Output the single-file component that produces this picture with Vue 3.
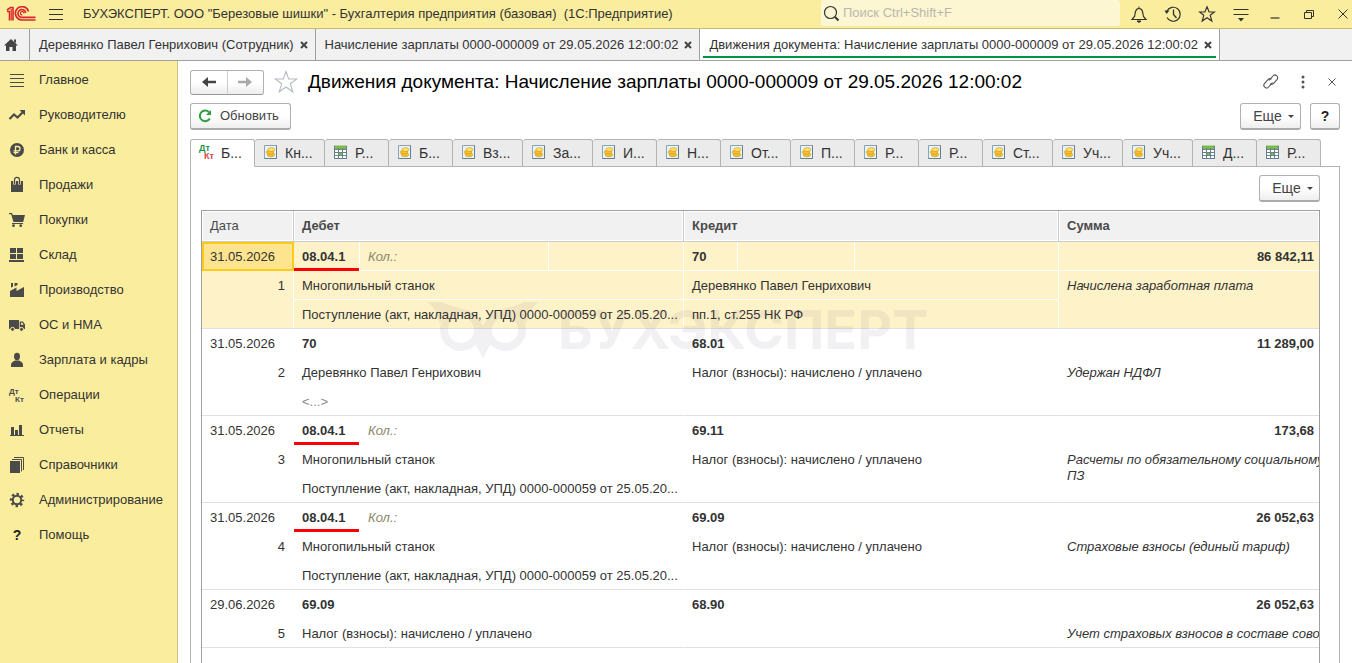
<template>
  <div class="app">
    <header class="title-bar">
      <svg class="logo" viewBox="0 0 30 16" aria-label="1C">
        <g fill="none" stroke="#d9262c">
          <path d="M1 5.5H3.5V14.5M1 4L4.5 1.5H7V14.5" stroke-width="1.6" />
          <path d="M5.2 3V14.5" stroke-width="1.2" />
          <path d="M22.5 5.5A6.7 6.7 0 1 0 16.5 14H29.5" stroke-width="1.7" />
          <path d="M19.7 6.8A3.9 3.9 0 1 0 16.5 11.3H29.5" stroke-width="1.7" />
          <path d="M18 7.5A1.8 1.8 0 1 0 16.3 9" stroke-width="1.2" />
        </g>
      </svg>
      <button class="icon-button menu-button" aria-label="Меню">
        <svg width="14" height="13" viewBox="0 0 14 13"><path d="M0 1.5H14M0 6.5H14M0 11.5H14" stroke="#333" /></svg>
      </button>
      <span class="app-title">БУХЭКСПЕРТ. ООО "Березовые шишки" - Бухгалтерия предприятия (базовая)&nbsp; (1С:Предприятие)</span>
      <label class="search">
        <svg width="17" height="17" viewBox="0 0 17 17" fill="none" stroke="#333">
          <circle cx="7.5" cy="7.5" r="6" stroke-width="1.2" />
          <path d="M12 12L15.5 15.5" stroke-width="2" />
        </svg>
        <input v-model="search" type="text" placeholder="Поиск Ctrl+Shift+F" aria-label="Поиск" />
      </label>
      <div class="window-tools">
        <button v-for="tool in tools" :key="tool" class="icon-button" :aria-label="tool">
          <svg width="18" height="18" viewBox="0 0 18 18" fill="none" stroke="#333" v-html="icons[tool]"></svg>
        </button>
      </div>
    </header>

    <nav class="open-tabs">
      <button class="home" aria-label="Начальная страница">
        <svg width="16" height="14" viewBox="0 0 16 14"><path d="M8 1L15 7.5H13V13H9.5V9H6.5V13H3V7.5H1L8 1ZM11 1.5H13V5L11 3.5Z" fill="#444" /></svg>
      </button>
      <div
          v-for="(tab, index) in openTabs"
          :key="index"
          class="open-tab"
          :class="{ current: index === 2 }"
      >
        <a href="#">{{ tab }}</a>
        <button class="icon-button" aria-label="Закрыть">
          <svg width="8" height="8" viewBox="0 0 8 8"><path d="M1 1L7 7M7 1L1 7" stroke="#444" stroke-width="2" /></svg>
        </button>
      </div>
    </nav>

    <div class="body">
      <aside class="sidebar">
        <a v-for="item in sections" :key="item.icon" href="#" class="section">
          <svg width="18" height="18" viewBox="0 0 18 18" fill="#4a4a4a" v-html="icons[item.icon]"></svg>
          <span>{{ item.label }}</span>
        </a>
      </aside>

      <main class="form">
        <div class="form-head">
          <div class="history">
            <button aria-label="Назад">
              <svg width="16" height="12" viewBox="0 0 16 12"><path d="M1 6L7 1V4.8H15V7.2H7V11Z" fill="#444" /></svg>
            </button>
            <button aria-label="Вперед">
              <svg width="16" height="12" viewBox="0 0 16 12"><path d="M15 6L9 1V4.8H1V7.2H9V11Z" fill="#aaa" /></svg>
            </button>
          </div>
          <button class="icon-button" aria-label="В избранное">
            <svg width="24" height="24" viewBox="0 0 24 24">
              <path d="M12 1.5L14.7 9H22.8L16.3 13.8L18.8 21.8L12 17L5.2 21.8L7.7 13.8L1.2 9H9.3Z" fill="#fff" stroke="#b4bac2" stroke-width="1.1" />
            </svg>
          </button>
          <h1>Движения документа: Начисление зарплаты 0000-000009 от 29.05.2026 12:00:02</h1>
          <div class="form-tools">
            <button class="icon-button" aria-label="Ссылка">
              <svg width="18" height="18" viewBox="0 0 18 18" fill="none" stroke="#555" stroke-width="1.1">
                <path d="M7 7.5L11 3A2.6 2.6 0 0 1 15 6.6L11.6 10.4A2.6 2.6 0 0 1 8.2 10.8" />
                <path d="M10.6 9.5L6.6 14A2.6 2.6 0 0 1 2.6 10.4L6 6.6A2.6 2.6 0 0 1 9.4 6.2" />
              </svg>
            </button>
            <button class="icon-button" aria-label="Действия">
              <svg width="12" height="14" viewBox="0 0 12 14" fill="#555">
                <circle cx="5" cy="2" r="1.5" /><circle cx="5" cy="7" r="1.5" /><circle cx="5" cy="12" r="1.5" />
              </svg>
            </button>
            <button class="icon-button" aria-label="Закрыть форму">
              <svg width="8" height="8" viewBox="0 0 8 8"><path d="M0.5 0.5L7.5 7.5M7.5 0.5L0.5 7.5" stroke="#555" /></svg>
            </button>
          </div>
        </div>

        <div class="command-bar">
          <button class="button">
            <svg width="14" height="14" viewBox="0 0 14 14">
              <path d="M11.8 9.5A5.3 5.3 0 1 1 11 3.2" fill="none" stroke="#2f9e3c" stroke-width="2" />
              <path d="M13 1V6H8Z" fill="#2f9e3c" />
            </svg>
            Обновить
          </button>
          <div class="command-right">
            <button class="button more">Еще<i class="caret"></i></button>
            <button class="button help">?</button>
          </div>
        </div>

        <div class="register-tabs" role="tablist">
          <button
              v-for="(tab, index) in registerTabs"
              :key="index"
              role="tab"
              class="register-tab"
              :class="{ active: index === activeTab, wide: tab.label.length > 1 }"
              @click="activeTab = index"
          >
            <svg width="18" height="18" viewBox="0 0 18 18" v-html="icons[tab.icon]"></svg>
            <span>{{ tab.label }}...</span>
          </button>
        </div>

        <section class="panel">
          <button class="button more">Еще<i class="caret"></i></button>

          <div class="table-box">
            <table>
              <colgroup>
                <col class="c-date" />
                <col class="c-account" />
                <col class="c-quantity" />
                <col class="c-currency" />
                <col class="c-credit" />
                <col class="c-quantity-credit" />
                <col class="c-currency-credit" />
                <col />
              </colgroup>
              <thead>
                <tr>
                  <th class="light">Дата</th>
                  <th colspan="3">Дебет</th>
                  <th colspan="3">Кредит</th>
                  <th>Сумма</th>
                </tr>
              </thead>
              <tbody v-for="(entry, index) in entries" :key="index" :class="{ selected: index === 0 }">
                <tr>
                  <td class="date">{{ entry.date }}</td>
                  <td class="account" :class="{ marked: entry.marked }">{{ entry.debit }}</td>
                  <td class="quantity">{{ entry.marked ? 'Кол.:' : '' }}</td>
                  <td></td>
                  <td class="account">{{ entry.credit }}</td>
                  <td></td>
                  <td></td>
                  <td class="sum">{{ entry.sum }}</td>
                </tr>
                <tr>
                  <td class="number" :rowspan="entry.debitRows.length">{{ index + 1 }}</td>
                  <td colspan="3">{{ entry.debitRows[0] }}</td>
                  <td colspan="3">{{ entry.creditRows[0] }}</td>
                  <td class="note" :rowspan="entry.debitRows.length">{{ entry.note }}</td>
                </tr>
                <tr v-if="entry.debitRows.length > 1">
                  <td colspan="3" :class="{ empty: entry.debitRows[1] === '<...>' }">{{ entry.debitRows[1] }}</td>
                  <td colspan="3">{{ entry.creditRows[1] }}</td>
                </tr>
              </tbody>
            </table>

            <div class="watermark" aria-hidden="true">
              <svg width="112" height="56" viewBox="0 0 112 56">
                <g fill="none" stroke="currentColor" stroke-width="8">
                  <circle cx="34" cy="28" r="17" />
                  <circle cx="78" cy="28" r="17" />
                </g>
                <path d="M0 0H14C30 7 46 6 56 24C66 6 82 7 98 0H112C106 4 102 10 99 22C94 12 84 8 74 10C64 14 60 24 56 34C52 24 48 14 38 10C28 8 18 12 13 22C10 10 6 4 0 0Z" />
                <path d="M46 38L56 28L66 38L56 56Z" />
              </svg>
              <span>БУХЭКСПЕРТ</span>
            </div>
          </div>
        </section>
      </main>
    </div>
  </div>
</template>

<script setup>
import { ref } from 'vue'

const search = ref('')
const activeTab = ref(0)

const tools = ['bell', 'history', 'star', 'settings', 'minimize', 'restore', 'close']

const openTabs = [
  'Деревянко Павел Генрихович (Сотрудник)',
  'Начисление зарплаты 0000-000009 от 29.05.2026 12:00:02',
  'Движения документа: Начисление зарплаты 0000-000009 от 29.05.2026 12:00:02'
]

const sections = [
  { label: 'Главное', icon: 'main' },
  { label: 'Руководителю', icon: 'trend' },
  { label: 'Банк и касса', icon: 'ruble' },
  { label: 'Продажи', icon: 'bag' },
  { label: 'Покупки', icon: 'cart' },
  { label: 'Склад', icon: 'store' },
  { label: 'Производство', icon: 'factory' },
  { label: 'ОС и НМА', icon: 'truck' },
  { label: 'Зарплата и кадры', icon: 'person' },
  { label: 'Операции', icon: 'operations' },
  { label: 'Отчеты', icon: 'reports' },
  { label: 'Справочники', icon: 'books' },
  { label: 'Администрирование', icon: 'gear' },
  { label: 'Помощь', icon: 'help' }
]

const registerTabs = [
  { label: 'Б', icon: 'dtkt' },
  { label: 'Кн', icon: 'coins' },
  { label: 'Р', icon: 'sheet' },
  { label: 'Б', icon: 'coins' },
  { label: 'Вз', icon: 'coins' },
  { label: 'За', icon: 'coins' },
  { label: 'И', icon: 'coins' },
  { label: 'Н', icon: 'coins' },
  { label: 'От', icon: 'coins' },
  { label: 'П', icon: 'coins' },
  { label: 'Р', icon: 'coins' },
  { label: 'Р', icon: 'coins' },
  { label: 'Ст', icon: 'coins' },
  { label: 'Уч', icon: 'coins' },
  { label: 'Уч', icon: 'coins' },
  { label: 'Д', icon: 'sheet' },
  { label: 'Р', icon: 'sheet' }
]

const receipt = 'Поступление (акт, накладная, УПД) 0000-000059 от 25.05.20...'
const tax = 'Налог (взносы): начислено / уплачено'

const entries = [
  {
    date: '31.05.2026',
    debit: '08.04.1',
    credit: '70',
    sum: '86 842,11',
    marked: true,
    debitRows: ['Многопильный станок', receipt],
    creditRows: ['Деревянко Павел Генрихович', 'пп.1, ст.255 НК РФ'],
    note: 'Начислена заработная плата'
  },
  {
    date: '31.05.2026',
    debit: '70',
    credit: '68.01',
    sum: '11 289,00',
    debitRows: ['Деревянко Павел Генрихович', '<...>'],
    creditRows: [tax],
    note: 'Удержан НДФЛ'
  },
  {
    date: '31.05.2026',
    debit: '08.04.1',
    credit: '69.11',
    sum: '173,68',
    marked: true,
    debitRows: ['Многопильный станок', receipt],
    creditRows: [tax],
    note: 'Расчеты по обязательному социальному\nПЗ'
  },
  {
    date: '31.05.2026',
    debit: '08.04.1',
    credit: '69.09',
    sum: '26 052,63',
    marked: true,
    debitRows: ['Многопильный станок', receipt],
    creditRows: [tax],
    note: 'Страховые взносы (единый тариф)'
  },
  {
    date: '29.06.2026',
    debit: '69.09',
    credit: '68.90',
    sum: '26 052,63',
    debitRows: [tax],
    creditRows: [''],
    note: 'Учет страховых взносов в составе сово'
  }
]

// inner markup of the 18x18 icons
const icons = {
  bell: '<path d="M2 14.5H16L13.5 11.5C13 10 13 8 12.5 6.5C12 4.5 10.5 3.5 9 3.5C7.5 3.5 6 4.5 5.5 6.5C5 8 5 10 4.5 11.5Z" stroke-width="1.2"/><path d="M9 1.5V3.5"/><path d="M7 16H11L9 17.5Z" fill="#333"/>',
  history: '<path d="M3 6A7 7 0 1 1 3 12.5" stroke-width="1.2"/><path d="M0.5 5.5H5.5L2.5 9Z" fill="#333" stroke="none"/><path d="M9.5 4.5V9.5L12.5 13" stroke-width="1.3"/>',
  star: '<path d="M9 1.8L11.1 7H16.5L12.2 10.3L13.8 16L9 12.7L4.2 16L5.8 10.3L1.5 7H6.9Z" stroke-width="1.2"/>',
  settings: '<path d="M1.5 4.5H16.5M1.5 9.5H16.5" stroke-width="1.2"/><path d="M6 13H12L9 16.5Z" fill="#333" stroke="none"/>',
  minimize: '<path d="M4.5 13H13.5" stroke-width="1.2"/>',
  restore: '<path d="M4.5 7.5H11.5V13.5H4.5ZM6.5 7.5V5.5H13.5V11.5H11.5"/>',
  close: '<path d="M4.5 4.5L13.5 13.5M13.5 4.5L4.5 13.5"/>',
  main: '<path d="M2 3.5H16M2 7.5H16M2 11.5H16M2 15.5H16" stroke="#4a4a4a"/>',
  trend: '<path d="M1.5 13L6 8.5L9.5 11.5L14.5 6.5" fill="none" stroke="#4a4a4a" stroke-width="2.2"/><path d="M11.5 4H17V9.5Z"/>',
  ruble: '<circle cx="9" cy="9" r="7"/><path d="M7.5 13.5V5.5H9.8A2.2 2.2 0 0 1 9.8 9.9H5.5M5.5 11.7H10.5" fill="none" stroke="#fbed9e" stroke-width="1.3"/>',
  bag: '<path d="M3 5H15V16H3Z"/><path d="M6.5 8.5V4A2.5 2.5 0 0 1 11.5 4V8.5" fill="none" stroke="#fbed9e" stroke-width="2.6"/><path d="M6.5 8V3.8A2.5 2.5 0 0 1 11.5 3.8V8" fill="none" stroke="#4a4a4a" stroke-width="1.2"/>',
  cart: '<path d="M1 2H4L4.8 4H17L15.2 11H5.4L3.2 3.3H1Z"/><path d="M4 12H15V13H4Z"/><circle cx="5.5" cy="14.7" r="1.4"/><circle cx="12.7" cy="14.7" r="1.4"/>',
  store: '<path d="M2 2H8V7H2ZM9 2H15V7H9ZM2 8H8V13H2ZM9 8H15V13H9ZM1 14H16V16H1Z"/>',
  factory: '<path d="M2 16V10L8.5 6.5V10L16 6V16ZM3 2H5V5.5L3 6.8ZM6.5 2H9.5V4L6.5 5.5Z"/>',
  truck: '<path d="M1 4H11V13H1ZM11.7 5.5H15L17 8.5V13H11.7Z"/><path d="M13 6.7H14.5L15.6 8.7H13Z" fill="#fbed9e"/><g stroke="#fbed9e"><circle cx="4.5" cy="13.3" r="2"/><circle cx="13.5" cy="13.3" r="2"/></g>',
  person: '<ellipse cx="9" cy="5.5" rx="3" ry="3.7"/><path d="M3 16V13.5C3 11.5 5 10.5 7 9.5H11C13 10.5 15 11.5 15 13.5V16Z"/>',
  operations: '<g font-family="Liberation Sans, sans-serif" font-weight="bold" font-size="8"><text x="1" y="8">Дт</text><text x="7" y="16">Кт</text></g>',
  reports: '<path d="M3 6H6V14H3ZM7 9H10V14H7ZM11 4H14V14H11ZM2 14H16V15H2Z"/>',
  books: '<path d="M2 5H12V17H2Z"/><path d="M4 3.5H13.5V15.5M6 1.5H15.5V14" fill="none" stroke="#4a4a4a"/>',
  gear: '<circle cx="9" cy="9" r="4.2" fill="none" stroke="#4a4a4a" stroke-width="2"/><circle cx="9" cy="9" r="6" fill="none" stroke="#4a4a4a" stroke-width="2.4" stroke-dasharray="2.4 2.31" stroke-dashoffset="1.2"/>',
  help: '<text x="9" y="14" text-anchor="middle" fill="#222" font-family="Liberation Sans, sans-serif" font-weight="bold" font-size="14">?</text>',
  dtkt: '<g font-family="Liberation Sans, sans-serif" font-weight="bold" font-size="9"><text x="1" y="7" fill="#16944a">Дт</text><text x="6" y="15" fill="#d9444a">Кт</text></g>',
  coins: '<path d="M2.5 1.5H14.5V14.5H2.5Z" fill="#e9f3f8" stroke="#8aa4b5"/><path d="M14.5 1.5V14.5H2.5" fill="none" stroke="#66808f"/><g fill="#f5c02c" stroke="#c8890c" stroke-width="0.5"><ellipse cx="9" cy="10.8" rx="3.8" ry="1.9"/><ellipse cx="8" cy="8.2" rx="3.8" ry="1.9"/><ellipse cx="9.4" cy="5.6" rx="3.6" ry="1.9" fill="#ffe06a"/></g>',
  sheet: '<path d="M2.5 2.5H14.5V14.5H2.5Z" fill="#fff"/><path d="M2 1.5H15V5H2Z" fill="#7dba4c"/><path d="M7 9H10V11H7Z" fill="#7dba4c"/><path d="M2.5 5.5H14.5M2.5 8.5H14.5M2.5 11.5H14.5M2.5 14.5H14.5M2.5 2V15M6.5 4V15M10.5 4V15M14.5 2V15" fill="none" stroke="#66808f"/>'
}
</script>

<style>
body {
  margin: 0;
  overflow: hidden;
}
</style>

<style scoped>
.app {
  height: 100vh;
  display: flex;
  flex-direction: column;
  background: #fff;
  color: #333;
  font-family: "Liberation Sans", Arial, sans-serif;
  font-size: 13px;
  line-height: 16px;
}

button,
input {
  font: inherit;
  color: inherit;
}

a {
  color: inherit;
  text-decoration: none;
}

svg {
  display: block;
  flex: none;
}

.icon-button {
  display: flex;
  padding: 0;
  border: none;
  background: none;
}

.title-bar {
  display: flex;
  align-items: center;
  flex: none;
  height: 28px;
  padding: 0 0 0 6px;
  background: #fbed9e;
  border-bottom: 1px solid #c9ba72;
}

.logo {
  width: 30px;
  height: 16px;
}

.menu-button {
  margin: 0 20px 0 13px;
}

.app-title {
  flex: 1;
  white-space: nowrap;
}

.search {
  display: flex;
  align-items: center;
  align-self: flex-start;
  gap: 3px;
  width: 297px;
  height: 26px;
  padding-left: 2px;
  border-radius: 3px;
  background: #fdf6d3;
}

.search input {
  flex: 1;
  min-width: 0;
  padding: 0;
  border: none;
  outline: none;
  background: none;
}

.search input::placeholder {
  color: #b9b7ad;
}

.window-tools {
  display: flex;
  gap: 16px;
  margin-left: 10px;
}

.open-tabs {
  display: flex;
  flex: none;
  height: 31px;
  background: #f1f1f1;
  border-bottom: 1px solid #a0a0a0;
}

.home {
  width: 30px;
  padding: 0 0 0 3px;
  border: none;
  border-right: 1px solid #a0a0a0;
  background: none;
}

.open-tab {
  display: flex;
  align-items: center;
  gap: 6px;
  padding: 0 7px 0 9px;
  border-right: 1px solid #a0a0a0;
  white-space: nowrap;
}

.open-tab.current {
  background: linear-gradient(#009646, #009646) center bottom 2px / calc(100% - 6px) 2px no-repeat #fff;
}

.body {
  flex: 1;
  display: flex;
  min-height: 0;
}

.sidebar {
  flex: none;
  width: 177px;
  padding-top: 1px;
  background: #fbed9e;
  border-right: 1px solid #c9c08a;
}

.section {
  display: flex;
  align-items: center;
  gap: 13px;
  height: 35px;
  padding-left: 8px;
}

.form {
  flex: 1;
  min-width: 0;
  display: flex;
  flex-direction: column;
  padding: 8px 12px 0;
}

.form-head {
  display: flex;
  align-items: center;
  height: 26px;
  gap: 10px;
}

.history {
  display: flex;
  box-sizing: border-box;
  width: 74px;
  height: 25px;
  border: 1px solid #b0b0b0;
  border-bottom-color: #999;
  border-radius: 3px;
  background: linear-gradient(#fff 50%, #ededed);
}

.history button {
  flex: 1;
  display: flex;
  align-items: center;
  justify-content: center;
  padding: 0;
  border: none;
  background: none;
}

.history button + button {
  border-left: 1px solid #ccc;
}

h1 {
  flex: 1;
  margin: 0;
  color: #000;
  font-size: 19px;
  font-weight: normal;
  line-height: 24px;
  white-space: nowrap;
}

.form-tools {
  display: flex;
  align-items: center;
  gap: 18px;
  padding-right: 4px;
}

.command-bar {
  display: flex;
  justify-content: space-between;
  margin-top: 8px;
}

.command-right {
  display: flex;
  gap: 9px;
}

.button {
  display: flex;
  align-items: center;
  justify-content: center;
  gap: 8px;
  box-sizing: border-box;
  height: 27px;
  padding: 0 11px 0 7px;
  border: 1px solid #b0b0b0;
  border-bottom: 2px solid #aaa;
  border-radius: 3px;
  background: linear-gradient(#fff 50%, #efefef);
  color: #444;
}

.more {
  width: 61px;
  gap: 6px;
  padding: 0 6px 0 12px;
  font-size: 14px;
}

.help {
  width: 30px;
  padding: 0;
  color: #222;
  font-size: 14px;
  font-weight: bold;
}

.caret {
  border: 3px solid transparent;
  border-top-color: #444;
  border-bottom: none;
}

.register-tabs {
  display: flex;
  flex: none;
  margin-top: 9px;
  padding-left: 1px;
}

.register-tab {
  display: flex;
  align-items: center;
  gap: 5px;
  box-sizing: border-box;
  width: 64px;
  height: 28px;
  padding: 0 0 1px 7px;
  border: 1px solid #b3b3b3;
  border-left: none;
  border-radius: 3px 3px 0 0;
  background: #ebebeb;
  font-size: 14px;
}

.register-tab.wide {
  width: 70px;
}

.register-tab.active {
  margin-left: -1px;
  width: 65px;
  border-left: 1px solid #b3b3b3;
  border-bottom-color: #fff;
  background: #fff;
  z-index: 1;
}

.panel {
  flex: 1;
  display: flex;
  flex-direction: column;
  min-height: 0;
  margin-top: -1px;
  padding: 8px 19px 0 10px;
  border: 1px solid #b3b3b3;
  border-bottom: none;
}

.panel > .more {
  flex: none;
  align-self: flex-end;
  margin-bottom: 8px;
}

.table-box {
  position: relative;
  flex: 1;
  min-height: 0;
  overflow: hidden;
  border: 1px solid #a0a0a0;
  border-bottom: none;
}

table {
  width: 100%;
  table-layout: fixed;
  border-collapse: separate;
  border-spacing: 0;
}

.c-date {
  width: 92px;
}

.c-account {
  width: 66px;
}

.c-quantity {
  width: 189px;
}

.c-currency {
  width: 135px;
}

.c-credit {
  width: 54px;
}

.c-quantity-credit {
  width: 117px;
}

.c-currency-credit {
  width: 204px;
}

th,
td {
  box-sizing: border-box;
  overflow: hidden;
  height: 29px;
  padding: 0 8px;
  border-right: 1px solid #fff;
  border-bottom: 1px solid #fff;
  text-align: left;
  white-space: nowrap;
}

td {
  padding-top: 2px;
}

th {
  height: 31px;
  border-right-color: #ccc;
  border-bottom-color: #ccc;
  box-shadow: inset 0 0 0 1px #fff;
  background: #f1f1f1;
  color: #4a4a4a;
}

th.light {
  font-weight: normal;
}

th:last-child,
td.sum,
td.note {
  border-right: none;
}

tbody tr:last-child td,
td.number,
td.note {
  border-bottom-color: #e0e0e0;
}

.selected td {
  background: #fef2c8;
}

.selected .date {
  border: 2px solid #fccb19;
  padding: 0 6px;
  background: #fee48e;
}

.account,
.sum {
  font-weight: bold;
}

.account {
  position: relative;
  overflow: visible;
}

.marked::after {
  content: "";
  position: absolute;
  right: 0;
  bottom: -1px;
  left: 0;
  height: 3px;
  background: #fb0007;
}

.quantity {
  color: #8b8768;
  font-style: italic;
}

td.sum {
  padding-right: 5px;
  text-align: right;
}

.number {
  text-align: right;
  vertical-align: top;
  padding-top: 7px;
}

.note {
  vertical-align: top;
  padding-top: 7px;
  font-style: italic;
  white-space: pre;
}

.empty {
  color: #888;
}

.watermark {
  position: absolute;
  top: 91px;
  left: 225px;
  display: flex;
  align-items: flex-start;
  gap: 19px;
  opacity: 0.06;
  color: #28284a;
  font-family: Inter, sans-serif;
  font-size: 54px;
  font-weight: bold;
  line-height: 56px;
  pointer-events: none;
}

.watermark svg {
  fill: currentColor;
}
</style>
